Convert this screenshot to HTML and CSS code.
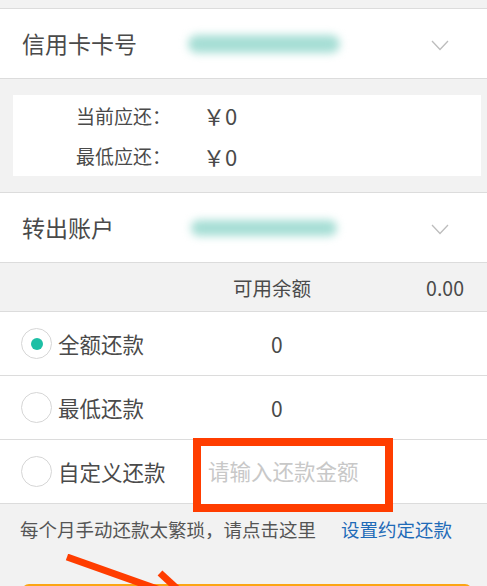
FILE: index.html
```html
<!DOCTYPE html>
<html lang="zh">
<head>
<meta charset="utf-8">
<link rel="stylesheet" href="styles.css">
</head>
<body>
<div class="page">
  <div class="top-gap"></div>
  <div class="select-row first">
    <span class="select-label">信用卡卡号</span>
    <span class="blur blur-1"></span>
    <svg class="chev" width="18" height="11" viewBox="0 0 18 11"><path d="M1 1 L9 9.5 L17 1" fill="none" stroke="#bdbdbd" stroke-width="1.3"/></svg>
  </div>
  <div class="info-box">
    <div class="info-line"><span class="info-label">当前应还：</span><span class="info-val">￥0</span></div>
    <div class="info-line"><span class="info-label">最低应还：</span><span class="info-val">￥0</span></div>
  </div>
  <div class="select-row second">
    <span class="select-label">转出账户</span>
    <span class="blur blur-2"></span>
    <svg class="chev" width="18" height="11" viewBox="0 0 18 11"><path d="M1 1 L9 9.5 L17 1" fill="none" stroke="#bdbdbd" stroke-width="1.3"/></svg>
  </div>
  <div class="balance">
    <span class="balance-label">可用余额</span>
    <span class="balance-val">0.00</span>
  </div>
  <div class="options">
    <div class="opt">
      <span class="radio on"></span>
      <span class="opt-label">全额还款</span>
      <span class="opt-val">0</span>
    </div>
    <div class="opt">
      <span class="radio"></span>
      <span class="opt-label">最低还款</span>
      <span class="opt-val">0</span>
    </div>
    <div class="opt custom">
      <span class="radio"></span>
      <span class="opt-label">自定义还款</span>
      <div class="mark-box"><span class="placeholder">请输入还款金额</span></div>
    </div>
  </div>
  <div class="notice">
    <span class="notice-text">每个月手动还款太繁琐，请点击这里</span>
    <span class="notice-link">设置约定还款</span>
  </div>
  <div class="btn-wrap">
    <div class="btn"></div>
    <svg class="arrows" width="200" height="40" viewBox="0 0 200 40"><path d="M67 3 L160 36" stroke="#ff3d00" stroke-width="7"/><path d="M160 19 L185 42" stroke="#ff3d00" stroke-width="7"/></svg>
  </div>
</div>
</body>
</html>
```
FILE: styles.css
```css
* { box-sizing: border-box; }
html, body { margin: 0; padding: 0; }
body {
  background: #f2f2f2;
  font-family: "Noto Sans CJK SC", "Noto Sans", sans-serif;
  color: #4a4a4a;
}
.page {
  width: 487px;
  height: 586px;
  overflow: hidden;
}
.top-gap { height: 8px; }
.select-row {
  position: relative;
  display: flex;
  align-items: center;
  height: 71px;
  background: #fff;
  border-top: 1px solid #dcdcdc;
  border-bottom: 1px solid #dcdcdc;
  padding-left: 22px;
}
.select-label {
  font-size: 23px;
  width: 166px;
  line-height: 1;
  color: #4a4a4a;
}
.blur {
  display: block;
  width: 152px;
  height: 18px;
  background: #a6ded5;
  border-radius: 9px;
  filter: blur(4px);
}
.blur-2 { width: 146px; height: 16px; margin-left: 3px; }
.chev { position: absolute; right: 38px; top: 31px; }
.info-box {
  margin: 16px 6px 16px 13px;
  background: #fff;
  height: 81px;
  padding-left: 63px;
}
.info-line {
  display: flex;
  align-items: center;
  height: 40.5px;
  font-size: 19px;
  color: #4a4a4a;
}
.info-label { width: 127px; }
.info-val { font-size: 22px; }
.balance {
  display: flex;
  align-items: center;
  height: 48px;
  padding-left: 233px;
  padding-right: 23px;
  font-size: 19.5px;
  color: #4a4a4a;
}
.balance-label { flex: 1; }
.options {
  background: #fff;
  border-top: 1px solid #dcdcdc;
}
.opt {
  position: relative;
  display: flex;
  align-items: center;
  height: 64px;
  border-bottom: 1px solid #dcdcdc;
  padding-left: 21px;
}
.radio {
  width: 31px;
  height: 31px;
  border: 1.5px solid #d6d6d6;
  border-radius: 50%;
  display: flex;
  align-items: center;
  justify-content: center;
  margin-right: 6px;
}
.radio.on::after {
  content: "";
  width: 12px;
  height: 12px;
  border-radius: 50%;
  background: #1dbfa5;
}
.opt-label {
  font-size: 21.5px;
  width: 213px;
  color: #4a4a4a;
}
.opt-val { font-size: 21px; }
.mark-box {
  position: absolute;
  left: 193px;
  top: -2px;
  width: 200px;
  height: 74px;
  border: 8px solid #ff3d00;
  background: #fff;
  padding-left: 7px;
  display: flex;
  align-items: center;
}
.placeholder {
  font-size: 21.5px;
  color: #c8c8c8;
  margin-top: -10px;
}
.notice {
  display: flex;
  align-items: center;
  height: 50px;
  padding-left: 20px;
  font-size: 18.5px;
}
.notice-text { color: #555; width: 321px; }
.notice-link { color: #1f6bb8; }
.btn-wrap {
  position: relative;
  padding: 30px 15px 0 22px;
}
.btn {
  height: 50px;
  background: #fba514;
  border-radius: 7px;
}
.arrows { position: absolute; left: 0; top: 0; }
```
